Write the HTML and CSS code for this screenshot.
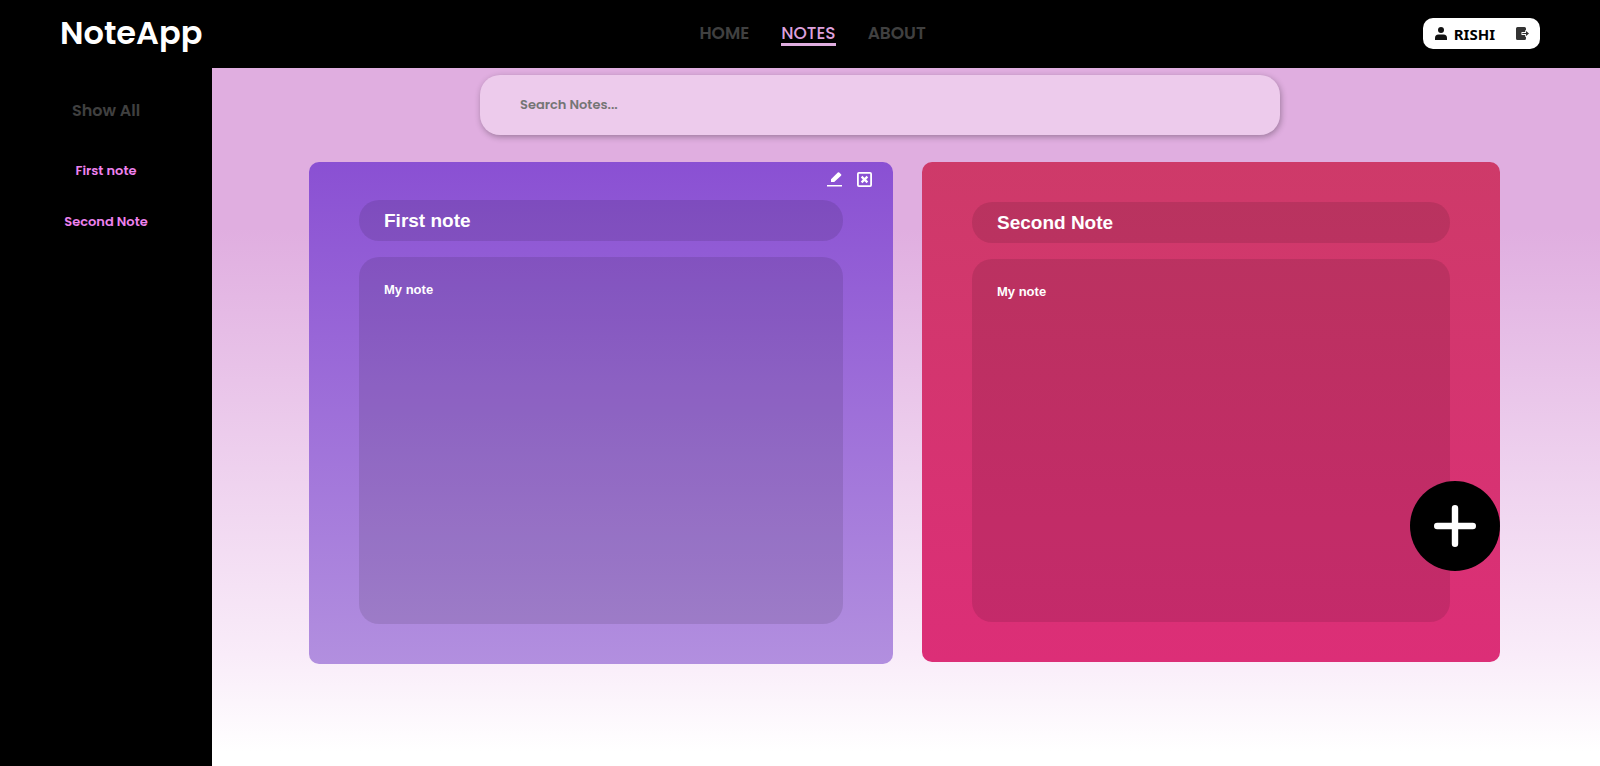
FILE: index.html
```html
<!DOCTYPE html>
<html lang="en">
<head>
<meta charset="utf-8">
<title>NoteApp</title>
<link rel="stylesheet" href="styles.css">
</head>
<body>
<header class="topbar">
  <a class="logo" href="#">NoteApp</a>
  <nav class="nav">
    <a class="nav-link" href="#">HOME</a>
    <a class="nav-link active" href="#">NOTES</a>
    <a class="nav-link" href="#">ABOUT</a>
  </nav>
  <div class="user">
    <svg class="user-icon" viewBox="0 0 12 13" aria-hidden="true"><circle cx="6" cy="3" r="3"/><path d="M0 13v-2a3.500 3.500 0 0 1 3.500-3.500h5a3.500 3.500 0 0 1 3.500 3.500v2z"/></svg>
    <span class="user-name">RISHI</span>
    <button class="logout" type="button" aria-label="Log out">
      <svg viewBox="0 0 13 13" aria-hidden="true"><path d="M1.500 0h7a1.500 1.500 0 0 1 1.500 1.500v10a1.500 1.500 0 0 1-1.500 1.500h-7A1.500 1.500 0 0 1 0 11.500v-10A1.500 1.500 0 0 1 1.500 0z" fill="#333"/><path d="M5.500 5h3.700V2.800L13 6.500 9.200 10.200V8H5.500z" fill="#fff"/><path d="M6.300 5.900H10V4l3 2.500L10 9V7.100H6.300z" fill="#333"/></svg>
    </button>
  </div>
</header>
<div class="layout">
  <aside class="sidebar">
    <button class="show-all" type="button">Show All</button>
    <a class="side-link" href="#first">First note</a>
    <a class="side-link" href="#second">Second Note</a>
  </aside>
  <main class="main">
    <div class="search-row">
      <input class="search" type="search" placeholder="Search Notes..." aria-label="Search notes">
    </div>
    <div class="notes">
      <article class="note note-purple raised" id="first">
        <div class="actions">
          <button class="action" type="button" aria-label="Edit note">
            <svg viewBox="0 0 15 15" aria-hidden="true"><path d="M4 10V7.200L10.800.500q.700-.600 1.400 0l1.800 1.800q.700.700 0 1.400L7.200 10zM0 13h15v1.500H0z" fill="#fff"/></svg>
          </button>
          <button class="action" type="button" aria-label="Delete note">
            <svg viewBox="0 0 15 15" aria-hidden="true"><rect x=".9" y=".9" width="13.200" height="13.200" rx="1" fill="none" stroke="#fff" stroke-width="1.800"/><path d="M4.600 4.600l5.800 5.800M10.400 4.600l-5.800 5.800" stroke="#fff" stroke-width="2.200"/></svg>
          </button>
        </div>
        <input class="note-title" value="First note" aria-label="Title">
        <textarea class="note-body" aria-label="Note text">My note</textarea>
      </article>
      <article class="note note-pink" id="second">
        <input class="note-title" value="Second Note" aria-label="Title">
        <textarea class="note-body" aria-label="Note text">My note</textarea>
      </article>
    </div>
  </main>
</div>
<button class="add" type="button" aria-label="Add note">
  <svg viewBox="0 0 42 42" aria-hidden="true"><path d="M21 3.200v35.600M3.200 21h35.600" stroke="#fff" stroke-width="6.400" stroke-linecap="round"/></svg>
</button>
</body>
</html>
```
FILE: styles.css
```css
* { box-sizing: border-box; }
body {
  margin: 0;
  min-height: 100vh;
  display: flex;
  flex-direction: column;
  font-family: Poppins, Inter, sans-serif;
  font-weight: 600;
}
a { text-decoration: none; }
button { font: inherit; border: 0; padding: 0; background: none; cursor: pointer; }
svg { display: block; }

.topbar {
  height: 68px;
  padding: 0 60px 1px;
  display: flex;
  align-items: center;
  justify-content: space-between;
  background: #000;
}
.logo { color: #fff; font-size: 32px; line-height: 48px; padding-bottom: 1px; }
.nav { display: flex; gap: 32px; }
.nav-link {
  padding-top: 2px;
  color: #404040;
  font-size: 17px;
  line-height: 20px;
  border-bottom: 3px solid transparent;
}
.nav-link.active { color: #dda0dd; border-color: #e0aee0; font-weight: 500; }
.user {
  height: 31px;
  padding: 0 11px 0 12px;
  display: flex;
  align-items: center;
  border-radius: 10px;
  background: #fff;
}
.user-icon { width: 12px; height: 13px; fill: #111; }
.user-name {
  margin: 0 21px 0 7px;
  font: 700 15px/20px "Noto Sans", sans-serif;
}
.logout svg { width: 13px; height: 13px; }

.layout { flex: 1; display: grid; grid-template-columns: 212px 1fr; }
.sidebar {
  padding-top: 31px;
  display: flex;
  flex-direction: column;
  align-items: center;
  background: #000;
}
.show-all { color: #404040; font-size: 16px; line-height: 24px; margin-bottom: 38px; }
.side-link { color: #ee82ee; font-size: 13px; line-height: 20px; margin-bottom: 31px; }

.main {
  padding: 7px 100px 0;
  background: linear-gradient(#e0aee0 0, #e0aee0 23%, #f9ecf9 84%, #fff 98%);
}
.search-row {
  padding-right: 52px;
  display: flex;
  justify-content: center;
}
.search {
  width: 50vw;
  height: 60px;
  padding: 0 40px;
  border: 0;
  border-radius: 20px;
  background: #edcbec;
  box-shadow: 1px 2px 6px rgba(0, 0, 0, .3);
  font: 600 13px Poppins, Inter, sans-serif;
}
.search::placeholder { color: #757575; }
.notes {
  margin-top: 27px;
  display: grid;
  grid-template-columns: 1fr 1fr;
  gap: 32px;
}
.note {
  height: 500px;
  padding: 40px 50px;
  display: flex;
  flex-direction: column;
  gap: 16px;
  border-radius: 10px;
  position: relative;
}
.note-purple { background: linear-gradient(#8a50d3, #b28fdf); }
.note-pink { background: linear-gradient(#ce3a69, #dc2e77); }
.raised { height: 502px; margin: 0 -3px -2px; padding-top: 38px; }
.note-title, .note-body {
  border: 0;
  border-radius: 20px;
  background: rgba(0, 0, 0, .1);
  color: #fff;
  font-family: "Liberation Sans", Arial, sans-serif;
  font-weight: 700;
}
.note-title { height: 41px; padding: 0 25px; font-size: 19px; }
.note-body { flex: 1; padding: 25px; font-size: 13px; resize: none; }
.actions {
  position: absolute;
  top: 10px;
  right: 21px;
  display: flex;
  gap: 15px;
}
.action svg { width: 15px; height: 15px; }

.add {
  position: fixed;
  right: 100px;
  bottom: 195px;
  width: 90px;
  height: 90px;
  display: grid;
  place-items: center;
  border-radius: 50%;
  background: #000;
}
.add svg { width: 42px; height: 42px; }
```
